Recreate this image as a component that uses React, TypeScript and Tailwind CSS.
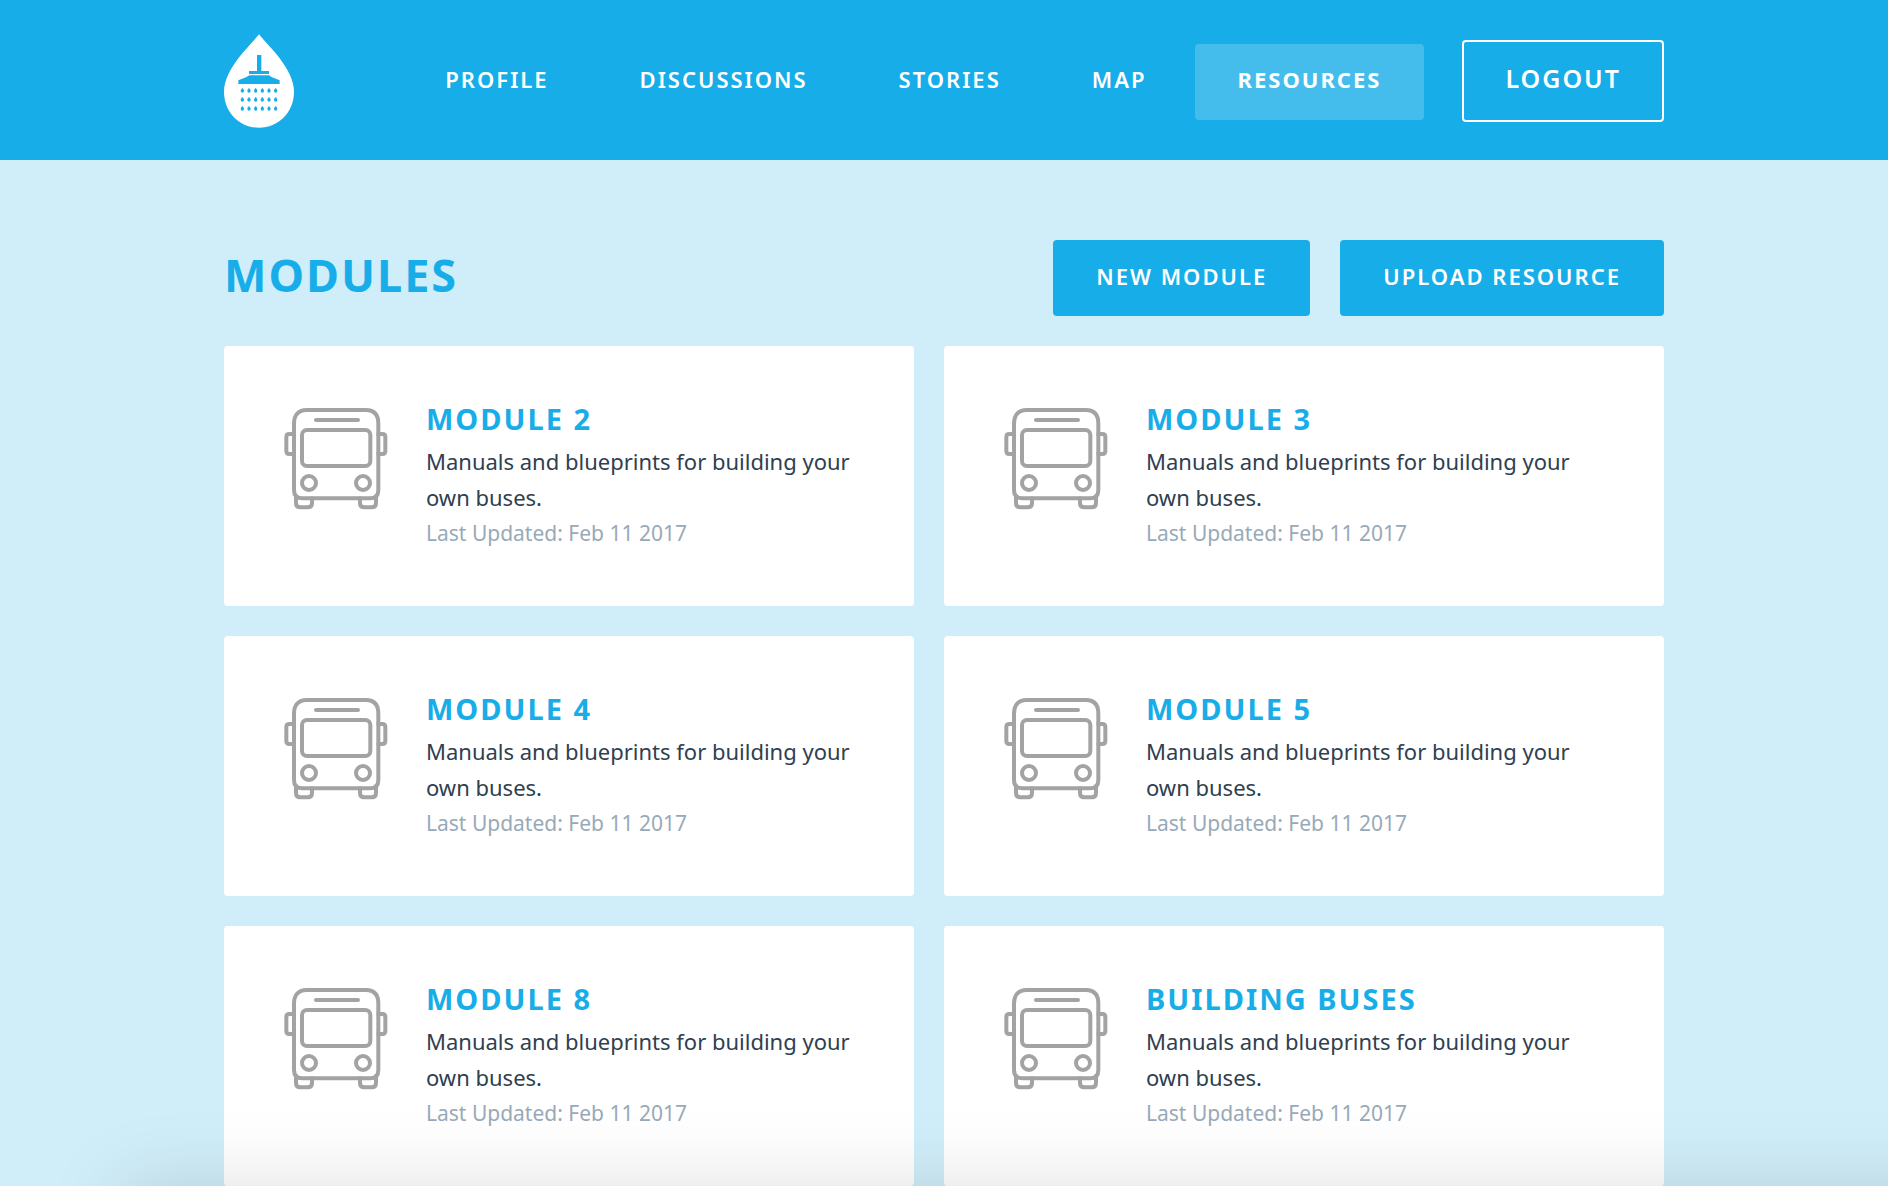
const navItems = [
  { label: "Profile", active: false },
  { label: "Discussions", active: false },
  { label: "Stories", active: false },
  { label: "Map", active: false },
  { label: "Resources", active: true },
];

const modules = ["Module 2", "Module 3", "Module 4", "Module 5", "Module 8", "Building Buses"];

const dropRows = [90, 117, 144];
const dropColumns = [127, 147, 167, 187, 207, 227];

function Logo() {
  return (
    <svg viewBox="0 0 210 282" className="h-[94px] w-[70px]" role="img" aria-label="Home">
      <path
        d="M105 1C92 18 66 43 43 73C20 104 0 138 0 173C0 235 47 281 105 281C163 281 210 235 210 173C210 138 190 104 167 73C144 43 118 18 105 1Z"
        fill="#fff"
      />
      <g transform="translate(-72 -42)" fill="#17ade8">
        <path d="M171 105h13v48h23v9h-60v-9h24z" />
        <path d="M148 166h59l9 6l23 9v11H115v-11l23-9z" />
        {dropRows.map((y) =>
          dropColumns.map((x) => (
            <path
              key={`${x}-${y}`}
              d={`M${x} ${y + 113}c1 3 5 5 5 9a5 6 0 0 1-10 0c0-4 4-6 5-9z`}
            />
          )),
        )}
      </g>
    </svg>
  );
}

function BusIcon() {
  return (
    <svg
      viewBox="42 51 312 312"
      className="h-[104px] w-[104px] shrink-0"
      fill="none"
      stroke="#a3a3a3"
      strokeWidth="12"
      strokeLinecap="round"
      strokeLinejoin="round"
      aria-hidden="true"
    >
      <path d="M72 300V101C72 75 85 60 110 60H288C313 60 325 75 325 101V300C325 318 315 325 300 325H97C82 325 72 318 72 300Z" />
      <path d="M138 90H264" />
      <rect x="96" y="120" width="205" height="108" rx="15" />
      <circle cx="117" cy="279" r="21" />
      <circle cx="279" cy="279" r="21" />
      <path d="M72 132H58Q49 132 49 141V183Q49 192 58 192H72" />
      <path d="M325 132H337Q346 132 346 141V183Q346 192 337 192H325" />
      <path d="M78 318V339Q78 352 91 352H113Q126 352 126 339V325" />
      <path d="M270 325V339Q270 352 283 352H305Q318 352 318 339V318" />
    </svg>
  );
}

function ModuleCard({ title }: { title: string }) {
  return (
    <article className="flex min-h-[260px] gap-[38px] rounded bg-white px-[60px] pt-[61px] pb-8">
      <BusIcon />
      <div className="min-w-0">
        <h2 className="text-[29px] leading-6 font-bold tracking-[2px] text-[#17ade8] uppercase">{title}</h2>
        <p className="mt-3 text-[22px] leading-9 text-[#2f4050]">
          Manuals and blueprints for building your own buses.
        </p>
        <p className="text-[21px] leading-9 text-[#98a9b8]">Last Updated: Feb 11 2017</p>
      </div>
    </article>
  );
}

function ActionButton({ children }: { children: string }) {
  return (
    <button
      type="button"
      className="h-19 rounded bg-[#17ade8] px-[43px] pb-1 text-[22px] font-semibold tracking-[2px] text-white uppercase"
    >
      {children}
    </button>
  );
}

export default function App() {
  return (
    <div className="min-h-screen overflow-hidden bg-[#d0eef9] font-['Noto_Sans',sans-serif]">
      <header className="bg-[#17ade8] px-6">
        <div className="mx-auto flex h-40 max-w-[1440px] items-center pt-0.5 text-white">
          <a href="#home">
            <Logo />
          </a>
          <nav className="ml-auto flex items-center gap-[5px] pt-0.5">
            {navItems.map(({ label, active }) => (
              <a
                key={label}
                href={`#${label.toLowerCase()}`}
                aria-current={active ? "page" : undefined}
                className={
                  active
                    ? "flex h-19 items-center rounded bg-white/20 px-[43px] pb-1.5 text-[22px] font-bold tracking-[2px] uppercase"
                    : "flex h-19 items-center rounded px-[43px] pb-1.5 text-[22px] font-semibold tracking-[2px] uppercase"
                }
              >
                {label}
              </a>
            ))}
          </nav>
          <button
            type="button"
            className="ml-[38px] h-[82px] rounded border-2 border-white px-[41px] pb-1 text-[25px] font-semibold tracking-[2px] uppercase"
          >
            Logout
          </button>
        </div>
      </header>

      <main className="px-6 pt-20">
        <div className="mx-auto max-w-[1440px]">
          <div className="flex items-center justify-between">
            <h1 className="pb-2 text-[45px] leading-none font-bold tracking-[2px] text-[#17ade8] uppercase">Modules</h1>
            <div className="flex gap-[30px]">
              <ActionButton>New Module</ActionButton>
              <ActionButton>Upload Resource</ActionButton>
            </div>
          </div>
          <section className="mt-[30px] grid grid-cols-[23fr_24fr] gap-[30px]" aria-label="Modules">
            {modules.map((title) => (
              <ModuleCard key={title} title={title} />
            ))}
          </section>
        </div>
      </main>

      <div className="pointer-events-none fixed inset-0 overflow-hidden" aria-hidden="true">
        <div className="absolute top-full -right-60 left-[120px] h-60 shadow-[0_0_80px_rgba(0,0,0,0.13)]" />
      </div>
    </div>
  );
}
